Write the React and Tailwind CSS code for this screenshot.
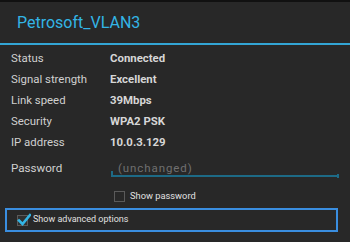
import React from "react";

const rows = [
  ["Status", "Connected"],
  ["Signal strength", "Excellent"],
  ["Link speed", "39Mbps"],
  ["Security", "WPA2 PSK"],
  ["IP address", "10.0.3.129"],
];

export default function App() {
  return (
    <div
      className="w-[350px] h-[242px] bg-[#282828] flex flex-col overflow-hidden"
      style={{ fontFamily: "Roboto, 'Noto Sans', sans-serif" }}
    >
      <div className="h-[2px] bg-[#111111] shrink-0" />
      <div className="h-[41px] flex items-center pl-[17px] shrink-0">
        <span className="text-[16px] leading-[20px] text-[#33b5e5]">Petrosoft_VLAN3</span>
      </div>
      <div className="h-[2px] bg-[#33a5d5] shrink-0" />
      <div className="flex flex-col pt-[3px]">
        {rows.map(([k, v]) => (
          <div key={k} className="flex items-center h-[21px]">
            <div className="w-[110px] pl-[11px] text-[11.4px] text-[#d0d0d0]">{k}</div>
            <div className="text-[11.4px] font-bold text-[#d6d6d6]">{v}</div>
          </div>
        ))}
      </div>
      <div className="flex items-start h-[23px] mt-[1px]">
        <div className="w-[111px] pl-[11px] pt-[6px] leading-[16px] text-[11.6px] text-[#d0d0d0]">Password</div>
        <div className="relative w-[228px] h-full border-b-2 border-[#1d6a86]">
          <div className="pl-[7px] pt-[6px] leading-[16px] text-[11.5px] tracking-[0.9px] text-[#707070]">(unchanged)</div>
          <div className="absolute left-0 bottom-[-2px] w-[2px] h-[6px] bg-[#1d6a86]" />
          <div className="absolute right-0 bottom-[-3px] w-[2px] h-[4px] bg-[#1d6a86]" />
        </div>
      </div>
      <div className="flex items-center h-[12px] mt-[13px] pl-[114px] gap-[5px]">
        <div className="w-[11px] h-[11px] border border-[#5a5a5a]" />
        <span className="text-[9.3px] text-[#e0e0e0]">Show password</span>
      </div>
      <div className="mt-[6px] ml-[5px] w-[333px] h-[24px] border-2 border-[#3a8ee0] flex items-center pl-[10px] gap-[5px]">
        <div className="relative w-[11px] h-[11px] border border-[#5a5a5a] bg-[#303030]">
          <svg className="absolute left-[-1px] top-[-3px]" width="14" height="14" viewBox="0 0 14 14">
            <path d="M2 7.5 L5.5 11 L13 2" fill="none" stroke="#33b5e5" strokeWidth="2.6" strokeLinecap="square" />
          </svg>
        </div>
        <span className="text-[9px] text-[#e0e0e0]">Show advanced options</span>
      </div>
    </div>
  );
}
